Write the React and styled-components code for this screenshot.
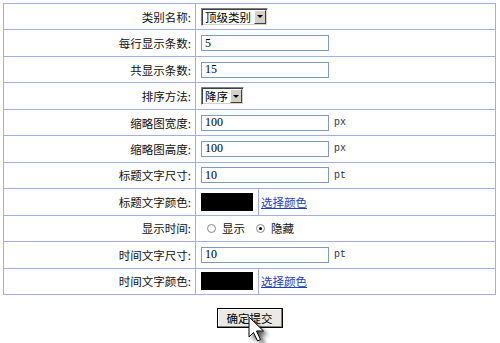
import React from 'react';
import styled, { createGlobalStyle } from 'styled-components';

const GlobalStyle = createGlobalStyle`
  html, body {
    margin: 0;
    padding: 0;
    background: #fff;
  }
  body {
    padding: 3px 0 0 3px;
    font-family: "Noto Sans CJK SC", "Liberation Sans", sans-serif;
    font-size: 11.5px;
    color: #111;
  }
`;

const FormGrid = styled.div`
  box-sizing: border-box;
  display: grid;
  grid-template-columns: 191px 1fr;
  grid-template-rows: repeat(11, 1fr);
  gap: 1px;
  width: 493px;
  height: 292px;
  padding: 1px;
  background: #9fb0e2;
`;

const LabelCell = styled.div`
  display: flex;
  align-items: center;
  justify-content: flex-end;
  padding-right: 4px;
  background: #fff;
  white-space: nowrap;
`;

const ValueCell = styled.div`
  display: flex;
  align-items: center;
  padding-left: ${(p) => (p.flush ? 0 : 5)}px;
  background: #fff;
`;

const TextInput = styled.input`
  box-sizing: border-box;
  width: 128px;
  height: 16px;
  border: 1px solid #7f9db9;
  padding: 0 3px;
  font-family: "Liberation Serif", "Noto Sans CJK SC", serif;
  font-size: 12px;
  color: #000;
  outline: none;
`;

const Unit = styled.span`
  margin-left: 5px;
  font-family: "Liberation Mono", monospace;
  font-size: 10px;
  color: #333;
`;

const SelectBox = styled.div`
  box-sizing: border-box;
  display: inline-flex;
  align-items: stretch;
  height: 18px;
  width: ${(p) => p.width}px;
  border: 1px solid;
  border-color: #808080 #fff #fff #808080;
  box-shadow: inset 1px 1px 0 #404040, inset -1px -1px 0 #d4d0c8;
  background: #fff;
  padding: 1px;
`;

const SelectText = styled.span`
  flex: 1;
  padding-left: 2px;
  line-height: 14px;
  white-space: nowrap;
  overflow: hidden;
  color: #000;
`;

const SelectButton = styled.span`
  box-sizing: border-box;
  width: 12px;
  background: #d4d0c8;
  border: 1px solid;
  border-color: #fff #404040 #404040 #fff;
  display: flex;
  align-items: center;
  justify-content: center;
  &::after {
    content: '';
    border-left: 3px solid transparent;
    border-right: 3px solid transparent;
    border-top: 3px solid #000;
  }
`;

const SwatchCell = styled.div`
  box-sizing: border-box;
  align-self: stretch;
  display: flex;
  align-items: center;
  width: 63px;
  padding-left: 5px;
  border-right: 1px solid #9fb0e2;
`;

const Swatch = styled.div`
  width: 52px;
  height: 18px;
  background: ${(p) => p.color};
`;

const ColorLink = styled.a`
  margin-left: 2px;
  color: #1d3fc4;
  text-decoration: underline;
  cursor: pointer;
`;

const Radio = styled.span`
  box-sizing: border-box;
  display: inline-flex;
  align-items: center;
  justify-content: center;
  width: 9px;
  height: 9px;
  border-radius: 50%;
  border: 1px solid #8a8a8a;
  background: #fff;
  margin-left: ${(p) => p.ml || 0}px;
  &::after {
    content: '';
    width: 3px;
    height: 3px;
    border-radius: 50%;
    background: ${(p) => (p.checked ? '#000' : 'transparent')};
  }
`;

const RadioLabel = styled.span`
  margin-left: 6px;
`;

const Footer = styled.div`
  position: relative;
  display: flex;
  justify-content: center;
  align-items: flex-start;
  width: 493px;
  height: 48px;
  padding-top: 13px;
`;

const SubmitButton = styled.button`
  box-sizing: border-box;
  width: 66px;
  height: 20px;
  background: #ece9e4;
  border: 1px solid #000;
  box-shadow: inset -1px -1px 0 #808080, inset 1px 1px 0 #fff;
  font-family: "Noto Sans CJK SC", sans-serif;
  font-size: 11.5px;
  line-height: 16px;
  padding: 0;
  color: #000;
`;

const Cursor = styled.svg`
  position: absolute;
  left: 241px;
  top: 21px;
  z-index: 2;
  pointer-events: none;
`;

const InputRow = ({ label, value, unit }) => (
  <>
    <LabelCell>{label}</LabelCell>
    <ValueCell>
      <TextInput defaultValue={value} />
      {unit && <Unit>{unit}</Unit>}
    </ValueCell>
  </>
);

const SelectRow = ({ label, value, width }) => (
  <>
    <LabelCell>{label}</LabelCell>
    <ValueCell>
      <SelectBox width={width}>
        <SelectText>{value}</SelectText>
        <SelectButton />
      </SelectBox>
    </ValueCell>
  </>
);

const ColorRow = ({ label }) => (
  <>
    <LabelCell>{label}</LabelCell>
    <ValueCell flush>
      <SwatchCell>
        <Swatch color="#000" />
      </SwatchCell>
      <ColorLink>选择颜色</ColorLink>
    </ValueCell>
  </>
);

export default function App() {
  return (
    <>
      <GlobalStyle />
      <FormGrid>
        <SelectRow label="类别名称:" value="顶级类别" width={67} />
        <InputRow label="每行显示条数:" value="5" />
        <InputRow label="共显示条数:" value="15" />
        <SelectRow label="排序方法:" value="降序" width={43} />
        <InputRow label="缩略图宽度:" value="100" unit="px" />
        <InputRow label="缩略图高度:" value="100" unit="px" />
        <InputRow label="标题文字尺寸:" value="10" unit="pt" />
        <ColorRow label="标题文字颜色:" />
        <LabelCell>显示时间:</LabelCell>
        <ValueCell>
          <Radio ml={6} />
          <RadioLabel>显示</RadioLabel>
          <Radio ml={11} checked />
          <RadioLabel>隐藏</RadioLabel>
        </ValueCell>
        <InputRow label="时间文字尺寸:" value="10" unit="pt" />
        <ColorRow label="时间文字颜色:" />
      </FormGrid>
      <Footer>
        <SubmitButton>确定提交</SubmitButton>
        <Cursor width="30" height="30" viewBox="0 0 30 30">
          <defs>
            <filter id="blur" x="-50%" y="-50%" width="200%" height="200%">
              <feGaussianBlur stdDeviation="2" />
            </filter>
          </defs>
          <path
            d="M9 5 L9 25 L13.5 20.5 L17.5 29 L21 27.5 L17 19 L24 19 Z"
            fill="#000"
            opacity="0.65"
            filter="url(#blur)"
          />
          <path
            d="M5 1 L5 21 L9.5 16.5 L13.5 25 L16.5 23.5 L12.5 15 L19.5 15 Z"
            fill="#fff"
            stroke="#000"
            strokeWidth="1"
            strokeLinejoin="miter"
          />
        </Cursor>
      </Footer>
    </>
  );
}
